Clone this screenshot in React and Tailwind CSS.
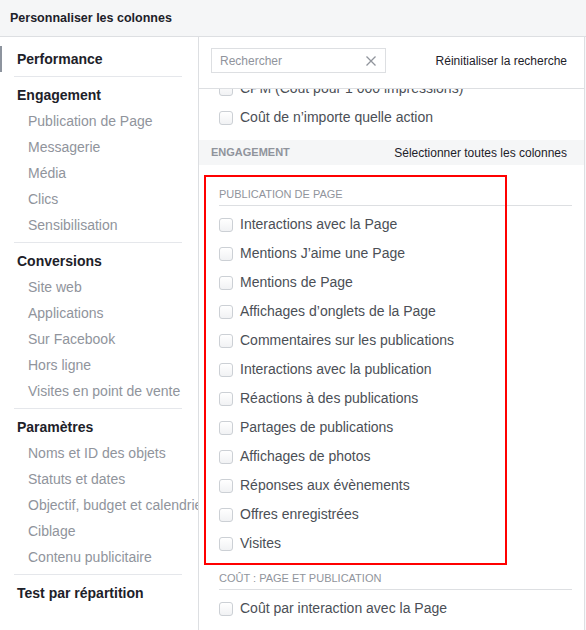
import React from "react";

const sidebarGroups = [
  { title: "Performance", active: true, items: [] },
  {
    title: "Engagement",
    items: ["Publication de Page", "Messagerie", "Média", "Clics", "Sensibilisation"],
  },
  {
    title: "Conversions",
    items: ["Site web", "Applications", "Sur Facebook", "Hors ligne", "Visites en point de vente"],
  },
  {
    title: "Paramètres",
    items: [
      "Noms et ID des objets",
      "Statuts et dates",
      "Objectif, budget et calendrier",
      "Ciblage",
      "Contenu publicitaire",
    ],
  },
  { title: "Test par répartition", items: [], last: true },
];

const pageMetrics = [
  "Interactions avec la Page",
  "Mentions J’aime une Page",
  "Mentions de Page",
  "Affichages d’onglets de la Page",
  "Commentaires sur les publications",
  "Interactions avec la publication",
  "Réactions à des publications",
  "Partages de publications",
  "Affichages de photos",
  "Réponses aux évènements",
  "Offres enregistrées",
  "Visites",
];

export default function App() {
  return (
    <div className="relative w-[586px] h-[630px] overflow-hidden bg-white flex flex-col font-['Liberation_Sans',Arial,sans-serif]">
      <div className="h-[37px] flex-shrink-0 flex items-center px-[10px] bg-[#f5f6f7] border-b border-[#dddfe2]">
        <span className="text-[12.5px] font-bold text-[#1d2129]">Personnaliser les colonnes</span>
      </div>

      <div className="flex flex-1 min-h-0">
        <Sidebar />
        <div className="w-[386px] flex-shrink-0 flex flex-col border-r border-[#dddfe2]">
          <SearchBar />
          <div className="flex-1 min-h-0 overflow-hidden">
            <div className="mt-[-15px]">
              <CheckRow label="CPM (Coût pour 1 000 impressions)" />
              <CheckRow label="Coût de n’importe quelle action" />
              <div className="mt-[8px] h-[25px] flex items-center justify-between pl-[12px] pr-[17px] bg-[#f5f6f7]">
                <span className="text-[11px] font-bold text-[#90949c]">ENGAGEMENT</span>
                <span className="text-[12px] text-[#1d2129]">Sélectionner toutes les colonnes</span>
              </div>
              <GroupHeader className="mt-[22px]">PUBLICATION DE PAGE</GroupHeader>
              <div className="mt-[4px]">
                {pageMetrics.map((m) => (
                  <CheckRow key={m} label={m} />
                ))}
              </div>
              <GroupHeader className="mt-[13px]">COÛT : PAGE ET PUBLICATION</GroupHeader>
              <div className="mt-[4px]">
                <CheckRow label="Coût par interaction avec la Page" />
              </div>
            </div>
          </div>
        </div>
        <div className="flex-1 bg-[#f7f8fa]" />
      </div>

      {/* annotation frame drawn over the list */}
      <div className="absolute left-[204px] top-[175px] w-[303px] h-[390px] border-2 border-[#ff0000] pointer-events-none" />
    </div>
  );
}

function Sidebar() {
  return (
    <div className="w-[199px] flex-shrink-0 border-r border-[#dddfe2] overflow-hidden whitespace-nowrap pt-[4px]">
      {sidebarGroups.map((g) => (
        <div key={g.title} className="pt-[5px]">
          <div
            className={
              g.active
                ? "h-[26px] flex items-center border-l-2 border-[#8d949e] pl-[15px] text-[14px] font-bold text-[#1d2129]"
                : "h-[26px] flex items-center pl-[17px] text-[14px] font-bold text-[#1d2129]"
            }
          >
            {g.title}
          </div>
          {g.items.map((it) => (
            <div key={it} className="h-[26px] flex items-center pl-[28px] text-[14px] text-[#90949c]">
              {it}
            </div>
          ))}
          {!g.last && <div className="mt-[4px] ml-[14px] mr-[16px] h-px bg-[#e5e7eb]" />}
        </div>
      ))}
    </div>
  );
}

function SearchBar() {
  return (
    <div className="h-[52px] flex-shrink-0 flex items-start justify-between pt-[11px] pl-[12px] pr-[17px] border-b border-[#dddfe2]">
      <div className="w-[175px] h-[25px] flex items-center justify-between border border-[#dddfe2] pl-[8px] pr-[9px]">
        <span className="text-[12px] text-[#90949c]">Rechercher</span>
        <svg width="10" height="10" viewBox="0 0 10 10" fill="none">
          <path d="M0.5 0.5L9.5 9.5M9.5 0.5L0.5 9.5" stroke="#90949c" strokeWidth="1.3" />
        </svg>
      </div>
      <span className="h-[25px] flex items-center text-[12px] text-[#1d2129]">Réinitialiser la recherche</span>
    </div>
  );
}

function GroupHeader({ children, className }) {
  return (
    <div className={className + " ml-[20px] mr-[12px] pb-[4px] border-b border-[#dddfe2]"}>
      <div className="text-[11px] leading-[14px] text-[#90949c]">{children}</div>
    </div>
  );
}

function CheckRow({ label }) {
  return (
    <div className="h-[29px] flex items-center pl-[20px] gap-[7px]">
      <span className="w-[14px] h-[14px] rounded-[3px] border border-[#ccd0d5] bg-gradient-to-b from-white to-[#f1f2f4] flex-shrink-0" />
      <span className="text-[14px] text-[#4b4f56] whitespace-nowrap">{label}</span>
    </div>
  );
}
